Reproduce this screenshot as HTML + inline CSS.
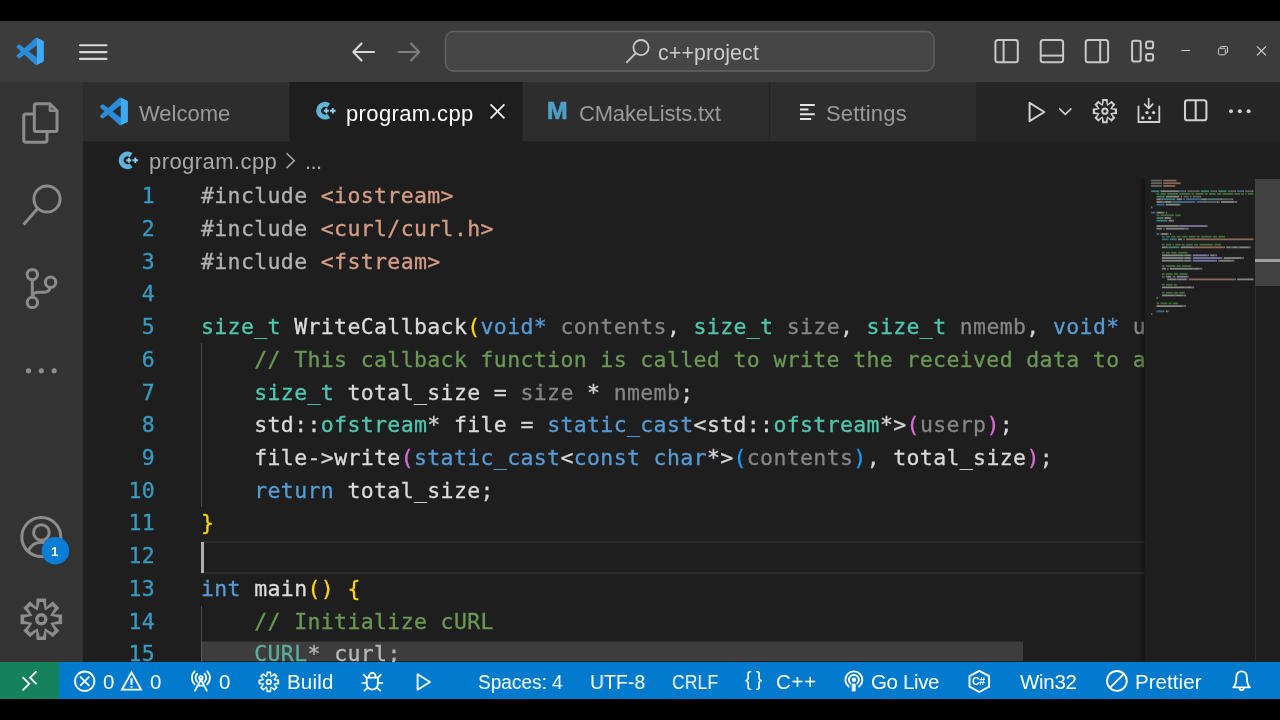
<!DOCTYPE html>
<html><head><meta charset="utf-8">
<style>
*{margin:0;padding:0;box-sizing:border-box}
html,body{width:1280px;height:720px;overflow:hidden;background:#000}
body{position:relative;font-family:"Liberation Sans",sans-serif;color:#ccc}
.abs{position:absolute}
#title{left:0;top:21px;width:1280px;height:61px;background:#3c3c3c}
#act{left:0;top:82px;width:83px;height:580px;background:#333}
#tabs{left:83px;top:82px;width:1197px;height:60px;background:#252526}
.tab{position:absolute;top:0;height:59px;background:#2d2d2d}
.tab.on{background:#1e1e1e;height:60px}
.t,.code,.ln{will-change:transform}
.t{position:absolute;white-space:pre;line-height:1}
#ed{left:83px;top:142px;width:1197px;height:520px;background:#1e1e1e;overflow:hidden}
#status{left:0;top:661.5px;width:1280px;height:37px;background:#007acc;color:#fff}
#remote{left:0;top:0;width:59px;height:37px;background:#16825d}
.ui{font-size:22px}
.st{font-size:20.5px;top:10.3px;color:#fff}
.code{-webkit-text-stroke:.3px;font-family:"DejaVu Sans Mono","Liberation Mono",monospace;font-size:21.5px;letter-spacing:.367px;white-space:pre;position:absolute;left:118px;line-height:1;color:#dadada}
.ln{-webkit-text-stroke:.3px;font-family:"DejaVu Sans Mono","Liberation Mono",monospace;font-size:21.5px;letter-spacing:.367px;white-space:pre;position:absolute;line-height:1;color:#379ac0;text-align:right;width:60px;left:12px}
.k{color:#569cd6}.ty{color:#4ec9b0}.s{color:#d69d85}.c{color:#6a9955}.p{color:#b2b2b2}.pa{color:#868686}.v{color:#dadada}
.b1{color:#ffd700}.b2{color:#da70d6}.b3{color:#179fff}.f{color:#dcdcdc}.o{color:#d4d4d4}
</style></head><body>
<div id="title" class="abs">
<svg class="abs" style="left:0;top:0" width="1280" height="61" viewBox="0 21 1280 61" fill="none">
  <!-- vscode logo -->
  <g transform="translate(16.5,37.8) scale(0.272)">
    <path fill-rule="evenodd" d="M70.9 99.3a6.2 6.2 0 0 0 4.96-.19l20.59-9.9A6.25 6.25 0 0 0 100 83.58V16.41a6.25 6.25 0 0 0-3.54-5.63L75.87.87a6.23 6.23 0 0 0-7.1 1.21L29.35 38.04 12.19 25.01a4.16 4.16 0 0 0-5.32.24l-5.5 5.01a4.17 4.17 0 0 0 0 6.16L16.25 50 1.37 63.58a4.17 4.17 0 0 0 0 6.17l5.5 5a4.16 4.16 0 0 0 5.32.24l17.17-13.03L68.77 97.9a6.2 6.2 0 0 0 2.14 1.4zM75.02 27.3L45.11 50l29.9 22.7V27.3z" fill="#2b8bd6"/>
    <path d="M75 0.6L96.46 10.78A6.25 6.25 0 0 1 100 16.41V83.58A6.25 6.25 0 0 1 96.45 89.2L75 99.4Z" fill="#3fa9f5"/>
  </g>
  <!-- hamburger -->
  <g stroke="#d6d6d6" stroke-width="2.1" stroke-linecap="round">
    <path d="M80 45.3H106.5M80 52.1H106.5M80 58.9H106.5"/>
  </g>
  <!-- arrows -->
  <g stroke="#d8d8d8" stroke-width="2.1" stroke-linecap="round" stroke-linejoin="round">
    <path d="M353.5 52H374M361.5 43.5L353.3 52L361.5 60.5"/>
  </g>
  <g stroke="#7e7e7e" stroke-width="2.1" stroke-linecap="round" stroke-linejoin="round">
    <path d="M398.5 52H419M411 43.5L419.2 52L411 60.5"/>
  </g>
  <!-- search box -->
  <rect x="445.5" y="31.5" width="488.5" height="39.5" rx="8" fill="#464646" stroke="#646464" stroke-width="1.3"/>
  <g stroke="#c8c8c8" stroke-width="1.8" stroke-linecap="round">
    <circle cx="641" cy="47.6" r="7.6"/>
    <path d="M635.5 53.3L626.8 62.3"/>
  </g>
  <!-- layout icons -->
  <g stroke="#c8c8c8" stroke-width="2" stroke-linejoin="round">
    <rect x="995.4" y="39.9" width="22.4" height="22.4" rx="2.6"/><path d="M1003.6 40V62"/>
    <rect x="1040.7" y="39.9" width="22.4" height="22.4" rx="2.6"/><path d="M1041 55.6H1063"/>
    <rect x="1085.7" y="39.9" width="22.4" height="22.4" rx="2.6"/><path d="M1100.2 40V62"/>
    <rect x="1132.1" y="40.8" width="8.6" height="20.6" rx="2"/>
    <rect x="1146.1" y="41.6" width="7" height="6.6" rx="1.8"/>
    <rect x="1146.1" y="54" width="7" height="6.6" rx="1.8"/>
  </g>
  <!-- window controls -->
  <g stroke="#d0d0d0" stroke-width="1">
    <path d="M1181.5 50.5H1190"/>
    <rect x="1218.4" y="48.3" width="7" height="6.5" rx="1.2"/>
    <path d="M1220.3 48V47.4Q1220.3 46.5 1221.4 46.5H1226.3Q1227.5 46.5 1227.5 47.7V52Q1227.5 53 1226.3 53H1225.6"/>
    <path d="M1257 46.3L1266 55.3M1266 46.3L1257 55.3" stroke-width="1.2"/>
  </g>
</svg>
<span class="t ui" id="proj" style="left:657.6px;top:22.3px;font-size:21.3px;letter-spacing:.15px;color:#ccc">c++project</span>

</div>
<div id="act" class="abs">
<svg class="abs" style="left:0;top:0" width="83" height="579" viewBox="0 82 83 579" fill="none">
  <g stroke="#8c8c8c" stroke-width="3" stroke-linejoin="round">
    <!-- files -->
    <path d="M50 103.8H36.5Q34.3 103.8 34.3 106V129.4Q34.3 131.6 36.5 131.6H54.8Q57 131.6 57 129.4V110.8Z"/>
    <path d="M50 103.8V110.8H57" stroke-width="2.6"/>
    <path d="M33 114H26Q23.8 114 23.8 116.2V140Q23.8 142.2 26 142.2H44.8Q47 142.2 47 140V133"/>
    <!-- search -->
    <circle cx="47" cy="199" r="13.1"/>
    <path d="M37.6 208.6L23.6 224.4" stroke-linecap="butt"/>
    <!-- scm -->
    <circle cx="32.3" cy="274.6" r="5.2"/><circle cx="50.6" cy="282.2" r="5.2"/><circle cx="32.4" cy="302.4" r="5.2"/>
    <path d="M32.3 280V297"/>
    <path d="M50 287.6Q49.5 292.2 44 292.2H38Q32.8 292.2 32.4 297"/>
    <!-- account -->
    <circle cx="41.3" cy="537.1" r="19.5"/>
    <circle cx="41.4" cy="532.5" r="7.8"/>
    <path d="M28.3 552Q31 542.2 41.3 542.2Q51.6 542.2 54.3 552"/>
    </g>
  <g id="gear2">
    <path d="M36.60 598.50L46.00 598.50L46.43 606.92L52.68 601.27L59.33 607.92L53.68 614.17L62.10 614.60L62.10 624.00L53.68 624.43L59.33 630.68L52.68 637.33L46.43 631.68L46.00 640.10L36.60 640.10L36.17 631.68L29.92 637.33L23.27 630.68L28.92 624.43L20.50 624.00L20.50 614.60L28.92 614.17L23.27 607.92L29.92 601.27L36.17 606.92ZM39.60 602.10L43.00 602.10L44.97 610.43L52.26 605.94L54.66 608.34L50.17 615.63L58.50 617.60L58.50 621.00L50.17 622.97L54.66 630.26L52.26 632.66L44.97 628.17L43.00 636.50L39.60 636.50L37.63 628.17L30.34 632.66L27.94 630.26L32.43 622.97L24.10 621.00L24.10 617.60L32.43 615.63L27.94 608.34L30.34 605.94L37.63 610.43Z" fill="#8c8c8c" fill-rule="evenodd"/>
    <circle cx="41.3" cy="619.3" r="4.50" stroke="#8c8c8c" stroke-width="3.40" fill="none"/>
  </g>
  <g fill="#8c8c8c"><circle cx="28.5" cy="370.8" r="2.6"/><circle cx="41.3" cy="370.8" r="2.6"/><circle cx="54.2" cy="370.8" r="2.6"/></g>
  <circle cx="55.4" cy="550.8" r="13.8" fill="#0a7dd4"/>
</svg>
<span class="t" style="left:51.2px;top:544.3px;font-size:13.4px;font-weight:bold;color:#fff;top:463.1px">1</span>

</div>
<div id="tabs" class="abs">
<div class="tab" style="left:0;width:206px"><span class="t ui" id="tw" style="left:56px;top:21.3px;color:#9a9a9a">Welcome</span></div>
<div class="tab on" style="left:207px;width:232px"><span class="t ui" id="tp" style="letter-spacing:.38px;left:263.5px;top:21.3px;color:#fff;left:55.6px">program.cpp</span></div>
<div class="tab" style="left:440px;width:246px"><span class="t" style="left:23.8px;top:16.6px;font-size:24.8px;font-weight:bold;color:#4fa0c8;-webkit-text-stroke:.7px #4fa0c8">M</span><span class="t ui" id="tc" style="letter-spacing:-.19px;left:56px;top:21.3px;color:#9a9a9a">CMakeLists.txt</span></div>
<div class="tab" style="left:687px;width:206px"><span class="t ui" id="ts" style="letter-spacing:.17px;left:56px;top:21.3px;color:#9a9a9a">Settings</span></div>
<svg class="abs" style="left:0;top:0" width="1197" height="60" viewBox="83 82 1197 60" fill="none">
  <!-- welcome logo -->
  <g transform="translate(100,97.5) scale(0.278)">
    <path fill-rule="evenodd" d="M70.9 99.3a6.2 6.2 0 0 0 4.96-.19l20.59-9.9A6.25 6.25 0 0 0 100 83.58V16.41a6.25 6.25 0 0 0-3.54-5.63L75.87.87a6.23 6.23 0 0 0-7.1 1.21L29.35 38.04 12.19 25.01a4.16 4.16 0 0 0-5.32.24l-5.5 5.01a4.17 4.17 0 0 0 0 6.16L16.25 50 1.37 63.58a4.17 4.17 0 0 0 0 6.17l5.5 5a4.16 4.16 0 0 0 5.32.24l17.17-13.03L68.77 97.9a6.2 6.2 0 0 0 2.14 1.4zM75.02 27.3L45.11 50l29.9 22.7V27.3z" fill="#2b8bd6"/>
    <path d="M75 0.6L96.46 10.78A6.25 6.25 0 0 1 100 16.41V83.58A6.25 6.25 0 0 1 96.45 89.2L75 99.4Z" fill="#3fa9f5"/>
  </g>
  <!-- cpp icon -->
  <g id="cppi">
    <path d="M328.64 105.5A6.35 6.35 0 1 0 328.64 115.9" stroke="#5fb3d9" stroke-width="5" fill="none"/>
    <path d="M323.8 110.7H328.8M326.3 108.2V113.2M330 110.7H335.6M332.8 107.9V113.5" stroke="#8ccfee" stroke-width="1.9"/>
  </g>
  <!-- close -->
  <path d="M490.6 104.4L504.4 118.3M504.4 104.4L490.6 118.3" stroke="#f0f0f0" stroke-width="1.8"/>
  <!-- settings icon -->
  <path d="M800 104.9H814.8M800 109.4H808.5M800 114.2H814.8M800 118.9H811.2" stroke="#e4e4e4" stroke-width="2"/>
  <!-- toolbar -->
  <g stroke="#d0d0d0" stroke-width="2.05" stroke-linejoin="round" stroke-linecap="round">
    <path d="M1029.6 102.8V121.2L1044.3 112Z"/>
    <path d="M1059.7 108.9L1065.3 114.4L1070.9 108.9" stroke-width="1.6"/>
    <rect x="1185" y="100.3" width="21.4" height="20" rx="2.4"/><path d="M1195.7 100.5V120" stroke-linecap="butt"/>
    <path d="M1148.7 98.5V108M1144.6 104.2L1148.7 108.3L1152.8 104.2" stroke-width="1.7"/>
    <path d="M1138.5 106.5V122H1159.3V106.5" stroke-width="1.8" stroke-linejoin="miter"/>
  </g>
  <g fill="#d0d0d0">
    <circle cx="1147" cy="112.6" r="1.7"/><circle cx="1153.6" cy="112.6" r="1.7"/>
    <circle cx="1142.8" cy="117.9" r="1.7"/><circle cx="1149.8" cy="117.9" r="1.7"/>
    <circle cx="1231" cy="111.3" r="2"/><circle cx="1239.8" cy="111.3" r="2"/><circle cx="1248.6" cy="111.3" r="2"/>
  </g>
  <!-- gear -->
  <g id="gear1">
    <path d="M1102.16 99.02L1107.64 99.02L1107.89 103.93L1111.54 100.64L1115.41 104.51L1112.12 108.16L1117.03 108.41L1117.03 113.89L1112.12 114.14L1115.41 117.79L1111.54 121.66L1107.89 118.37L1107.64 123.28L1102.16 123.28L1101.91 118.37L1098.26 121.66L1094.39 117.79L1097.68 114.14L1092.77 113.89L1092.77 108.41L1097.68 108.16L1094.39 104.51L1098.26 100.64L1101.91 103.93ZM1103.91 101.12L1105.89 101.12L1107.04 105.98L1111.29 103.36L1112.69 104.76L1110.07 109.01L1114.93 110.16L1114.93 112.14L1110.07 113.29L1112.69 117.54L1111.29 118.94L1107.04 116.32L1105.89 121.18L1103.91 121.18L1102.76 116.32L1098.51 118.94L1097.11 117.54L1099.73 113.29L1094.87 112.14L1094.87 110.16L1099.73 109.01L1097.11 104.76L1098.51 103.36L1102.76 105.98Z" fill="#d0d0d0" fill-rule="evenodd"/>
    <circle cx="1104.9" cy="111.15" r="2.62" stroke="#d0d0d0" stroke-width="1.98" fill="none"/>
  </g>
</svg>

</div>
<div id="ed" class="abs">
<div class="ln" style="top:43.36px">1</div>
<div class="code" style="top:43.36px"><span class="p">#include </span><span class="s">&lt;iostream&gt;</span></div>
<div class="ln" style="top:76.07px">2</div>
<div class="code" style="top:76.07px"><span class="p">#include </span><span class="s">&lt;curl/curl.h&gt;</span></div>
<div class="ln" style="top:108.78px">3</div>
<div class="code" style="top:108.78px"><span class="p">#include </span><span class="s">&lt;fstream&gt;</span></div>
<div class="ln" style="top:141.49px">4</div>
<div class="ln" style="top:174.20px">5</div>
<div class="code" style="top:174.20px"><span class="ty">size_t</span><span class="f"> WriteCallback</span><span class="b1">(</span><span class="k">void* </span><span class="pa">contents</span><span class="o">, </span><span class="ty">size_t</span><span class="pa"> size</span><span class="o">, </span><span class="ty">size_t</span><span class="pa"> nmemb</span><span class="o">, </span><span class="k">void* </span><span class="pa">userp</span><span class="b1">)</span><span class="o"> </span><span class="b1">{</span></div>
<div class="ln" style="top:206.91px">6</div>
<div class="code" style="top:206.91px"><span class="c">    // This callback function is called to write the received data to a file</span></div>
<div class="ln" style="top:239.62px">7</div>
<div class="code" style="top:239.62px"><span class="ty">    size_t</span><span class="v"> total_size </span><span class="o">= </span><span class="pa">size </span><span class="o">* </span><span class="pa">nmemb</span><span class="o">;</span></div>
<div class="ln" style="top:272.33px">8</div>
<div class="code" style="top:272.33px"><span class="v">    std</span><span class="o">::</span><span class="ty">ofstream</span><span class="o">* </span><span class="v">file </span><span class="o">= </span><span class="k">static_cast</span><span class="o">&lt;</span><span class="v">std</span><span class="o">::</span><span class="ty">ofstream</span><span class="o">*&gt;</span><span class="b2">(</span><span class="pa">userp</span><span class="b2">)</span><span class="o">;</span></div>
<div class="ln" style="top:305.04px">9</div>
<div class="code" style="top:305.04px"><span class="v">    file</span><span class="o">-&gt;</span><span class="f">write</span><span class="b2">(</span><span class="k">static_cast</span><span class="o">&lt;</span><span class="k">const char</span><span class="o">*&gt;</span><span class="b3">(</span><span class="pa">contents</span><span class="b3">)</span><span class="o">, </span><span class="v">total_size</span><span class="b2">)</span><span class="o">;</span></div>
<div class="ln" style="top:337.75px">10</div>
<div class="code" style="top:337.75px"><span class="k">    return</span><span class="v"> total_size</span><span class="o">;</span></div>
<div class="ln" style="top:370.46px">11</div>
<div class="code" style="top:370.46px"><span class="b1">}</span></div>
<div class="ln" style="top:403.17px">12</div>
<div class="ln" style="top:435.88px">13</div>
<div class="code" style="top:435.88px"><span class="k">int</span><span class="f"> main</span><span class="b1">()</span><span class="o"> </span><span class="b1">{</span></div>
<div class="ln" style="top:468.59px">14</div>
<div class="code" style="top:468.59px"><span class="c">    // Initialize cURL</span></div>
<div class="ln" style="top:501.30px">15</div>
<div class="code" style="top:501.30px"><span class="ty">    CURL</span><span class="o">* </span><span class="v">curl</span><span class="o">;</span></div>
<!-- current line highlight -->
<div class="abs" style="left:118px;top:399px;width:944px;height:2px;background:#2b2b2b"></div>
<div class="abs" style="left:118px;top:429.5px;width:944px;height:2px;background:#2b2b2b"></div>
<!-- indent guides -->
<div class="abs" style="left:118px;top:201px;width:1px;height:164px;background:#4a4a4a"></div>
<div class="abs" style="left:118px;top:464px;width:1px;height:60px;background:#4a4a4a"></div>
<!-- cursor -->
<div class="abs" style="left:118px;top:399.5px;width:3px;height:31.5px;background:#aeafad"></div>
<!-- breadcrumb -->
<span class="t ui" id="bc" style="left:65.6px;top:9.3px;color:#a9a9a9;letter-spacing:.43px">program.cpp</span>
<span class="t ui" id="bd" style="left:221.5px;top:9.3px;color:#a9a9a9;letter-spacing:-.6px">...</span>
<svg class="abs" style="left:0;top:0" width="1197" height="519" viewBox="83 142 1197 519" fill="none">
  <g transform="translate(-197.5,49.6)">
    <path d="M328.64 105.5A6.35 6.35 0 1 0 328.64 115.9" stroke="#5fb3d9" stroke-width="5" fill="none"/>
    <path d="M323.8 110.7H328.8M326.3 108.2V113.2M330 110.7H335.6M332.8 107.9V113.5" stroke="#8ccfee" stroke-width="1.9"/>
  </g>
  <path d="M286.5 153.2L294.3 160.7L286.5 168.2" stroke="#a0a0a0" stroke-width="1.6"/>
  <defs><linearGradient id="ms" x1="0" x2="1" y1="0" y2="0"><stop offset="0" stop-color="#000" stop-opacity="0"/><stop offset="1" stop-color="#000" stop-opacity="0.35"/></linearGradient></defs>
  <rect x="1145" y="179" width="110" height="482" fill="#1e1e1e"/>
  <rect x="1139" y="179" width="6" height="482" fill="url(#ms)"/>
  <!-- v scrollbar -->
  <rect x="1255" y="286" width="1" height="376" fill="#2e2e2e"/>
  <rect x="1255" y="179" width="25" height="107" fill="#424242"/>
  <rect x="1255" y="259" width="25" height="3" fill="#a0a0a0"/>
  <!-- h scrollbar -->
  <rect x="201" y="641.5" width="822" height="19.5" fill="#797979" fill-opacity="0.35"/>
<g opacity="0.58"><rect x="1151.1" y="179.70" width="10.8" height="1.8" fill="#9b9b9b"/><rect x="1163.2" y="179.70" width="13.4" height="1.8" fill="#d69d85"/><rect x="1151.1" y="182.37" width="10.8" height="1.8" fill="#9b9b9b"/><rect x="1163.2" y="182.37" width="17.5" height="1.8" fill="#d69d85"/><rect x="1151.1" y="185.04" width="10.8" height="1.8" fill="#9b9b9b"/><rect x="1163.2" y="185.04" width="12.1" height="1.8" fill="#d69d85"/><rect x="1151.1" y="190.38" width="8.1" height="1.8" fill="#4ec9b0"/><rect x="1160.5" y="190.38" width="17.5" height="1.8" fill="#d0d0d0"/><rect x="1178.0" y="190.38" width="1.3" height="1.8" fill="#b4b4b4"/><rect x="1179.3" y="190.38" width="5.4" height="1.8" fill="#569cd6"/><rect x="1184.7" y="190.38" width="1.3" height="1.8" fill="#b4b4b4"/><rect x="1187.4" y="190.38" width="10.8" height="1.8" fill="#8a8a8a"/><rect x="1198.2" y="190.38" width="1.3" height="1.8" fill="#b4b4b4"/><rect x="1200.9" y="190.38" width="8.1" height="1.8" fill="#4ec9b0"/><rect x="1210.3" y="190.38" width="5.4" height="1.8" fill="#8a8a8a"/><rect x="1215.7" y="190.38" width="1.3" height="1.8" fill="#b4b4b4"/><rect x="1218.3" y="190.38" width="8.1" height="1.8" fill="#4ec9b0"/><rect x="1227.8" y="190.38" width="6.7" height="1.8" fill="#8a8a8a"/><rect x="1234.5" y="190.38" width="1.3" height="1.8" fill="#b4b4b4"/><rect x="1237.2" y="190.38" width="5.4" height="1.8" fill="#569cd6"/><rect x="1242.6" y="190.38" width="1.3" height="1.8" fill="#b4b4b4"/><rect x="1245.2" y="190.38" width="6.7" height="1.8" fill="#8a8a8a"/><rect x="1252.0" y="190.38" width="1.3" height="1.8" fill="#b4b4b4"/><rect x="1156.5" y="193.05" width="2.7" height="1.8" fill="#57a64a"/><rect x="1160.5" y="193.05" width="5.4" height="1.8" fill="#57a64a"/><rect x="1167.2" y="193.05" width="10.8" height="1.8" fill="#57a64a"/><rect x="1179.3" y="193.05" width="10.8" height="1.8" fill="#57a64a"/><rect x="1191.4" y="193.05" width="2.7" height="1.8" fill="#57a64a"/><rect x="1195.5" y="193.05" width="8.1" height="1.8" fill="#57a64a"/><rect x="1204.9" y="193.05" width="2.7" height="1.8" fill="#57a64a"/><rect x="1208.9" y="193.05" width="6.7" height="1.8" fill="#57a64a"/><rect x="1217.0" y="193.05" width="4.0" height="1.8" fill="#57a64a"/><rect x="1222.4" y="193.05" width="10.8" height="1.8" fill="#57a64a"/><rect x="1234.5" y="193.05" width="5.4" height="1.8" fill="#57a64a"/><rect x="1241.2" y="193.05" width="2.7" height="1.8" fill="#57a64a"/><rect x="1245.2" y="193.05" width="1.3" height="1.8" fill="#57a64a"/><rect x="1247.9" y="193.05" width="5.4" height="1.8" fill="#57a64a"/><rect x="1156.5" y="195.72" width="8.1" height="1.8" fill="#4ec9b0"/><rect x="1165.9" y="195.72" width="13.4" height="1.8" fill="#d0d0d0"/><rect x="1180.7" y="195.72" width="1.3" height="1.8" fill="#b4b4b4"/><rect x="1183.4" y="195.72" width="5.4" height="1.8" fill="#8a8a8a"/><rect x="1190.1" y="195.72" width="1.3" height="1.8" fill="#b4b4b4"/><rect x="1192.8" y="195.72" width="6.7" height="1.8" fill="#8a8a8a"/><rect x="1199.5" y="195.72" width="1.3" height="1.8" fill="#b4b4b4"/><rect x="1156.5" y="198.39" width="4.0" height="1.8" fill="#d0d0d0"/><rect x="1160.5" y="198.39" width="1.3" height="1.8" fill="#b4b4b4"/><rect x="1161.9" y="198.39" width="1.3" height="1.8" fill="#b4b4b4"/><rect x="1163.2" y="198.39" width="10.8" height="1.8" fill="#4ec9b0"/><rect x="1174.0" y="198.39" width="1.3" height="1.8" fill="#b4b4b4"/><rect x="1176.7" y="198.39" width="5.4" height="1.8" fill="#d0d0d0"/><rect x="1183.4" y="198.39" width="1.3" height="1.8" fill="#b4b4b4"/><rect x="1186.1" y="198.39" width="14.8" height="1.8" fill="#569cd6"/><rect x="1200.9" y="198.39" width="1.3" height="1.8" fill="#b4b4b4"/><rect x="1202.2" y="198.39" width="4.0" height="1.8" fill="#d0d0d0"/><rect x="1206.2" y="198.39" width="1.3" height="1.8" fill="#b4b4b4"/><rect x="1207.6" y="198.39" width="1.3" height="1.8" fill="#b4b4b4"/><rect x="1208.9" y="198.39" width="10.8" height="1.8" fill="#4ec9b0"/><rect x="1219.7" y="198.39" width="1.3" height="1.8" fill="#b4b4b4"/><rect x="1221.0" y="198.39" width="1.3" height="1.8" fill="#b4b4b4"/><rect x="1222.4" y="198.39" width="1.3" height="1.8" fill="#b4b4b4"/><rect x="1223.7" y="198.39" width="6.7" height="1.8" fill="#8a8a8a"/><rect x="1230.5" y="198.39" width="1.3" height="1.8" fill="#b4b4b4"/><rect x="1231.8" y="198.39" width="1.3" height="1.8" fill="#b4b4b4"/><rect x="1156.5" y="201.06" width="5.4" height="1.8" fill="#d0d0d0"/><rect x="1161.9" y="201.06" width="1.3" height="1.8" fill="#b4b4b4"/><rect x="1163.2" y="201.06" width="1.3" height="1.8" fill="#b4b4b4"/><rect x="1164.5" y="201.06" width="6.7" height="1.8" fill="#d0d0d0"/><rect x="1171.3" y="201.06" width="1.3" height="1.8" fill="#b4b4b4"/><rect x="1172.6" y="201.06" width="14.8" height="1.8" fill="#569cd6"/><rect x="1187.4" y="201.06" width="1.3" height="1.8" fill="#b4b4b4"/><rect x="1188.8" y="201.06" width="6.7" height="1.8" fill="#569cd6"/><rect x="1196.8" y="201.06" width="5.4" height="1.8" fill="#569cd6"/><rect x="1202.2" y="201.06" width="1.3" height="1.8" fill="#b4b4b4"/><rect x="1203.6" y="201.06" width="1.3" height="1.8" fill="#b4b4b4"/><rect x="1204.9" y="201.06" width="1.3" height="1.8" fill="#b4b4b4"/><rect x="1206.2" y="201.06" width="10.8" height="1.8" fill="#8a8a8a"/><rect x="1217.0" y="201.06" width="1.3" height="1.8" fill="#b4b4b4"/><rect x="1218.3" y="201.06" width="1.3" height="1.8" fill="#b4b4b4"/><rect x="1221.0" y="201.06" width="13.4" height="1.8" fill="#d0d0d0"/><rect x="1234.5" y="201.06" width="1.3" height="1.8" fill="#b4b4b4"/><rect x="1235.8" y="201.06" width="1.3" height="1.8" fill="#b4b4b4"/><rect x="1156.5" y="203.73" width="8.1" height="1.8" fill="#569cd6"/><rect x="1165.9" y="203.73" width="13.4" height="1.8" fill="#d0d0d0"/><rect x="1179.3" y="203.73" width="1.3" height="1.8" fill="#b4b4b4"/><rect x="1151.1" y="206.40" width="1.3" height="1.8" fill="#b4b4b4"/><rect x="1151.1" y="211.74" width="4.0" height="1.8" fill="#569cd6"/><rect x="1156.5" y="211.74" width="5.4" height="1.8" fill="#d0d0d0"/><rect x="1161.9" y="211.74" width="1.3" height="1.8" fill="#b4b4b4"/><rect x="1163.2" y="211.74" width="1.3" height="1.8" fill="#b4b4b4"/><rect x="1165.9" y="211.74" width="1.3" height="1.8" fill="#b4b4b4"/><rect x="1156.5" y="214.41" width="2.7" height="1.8" fill="#57a64a"/><rect x="1160.5" y="214.41" width="13.4" height="1.8" fill="#57a64a"/><rect x="1175.3" y="214.41" width="5.4" height="1.8" fill="#57a64a"/><rect x="1156.5" y="217.08" width="5.4" height="1.8" fill="#4ec9b0"/><rect x="1161.9" y="217.08" width="1.3" height="1.8" fill="#b4b4b4"/><rect x="1164.5" y="217.08" width="5.4" height="1.8" fill="#d0d0d0"/><rect x="1169.9" y="217.08" width="1.3" height="1.8" fill="#b4b4b4"/><rect x="1156.5" y="219.75" width="10.8" height="1.8" fill="#4ec9b0"/><rect x="1168.6" y="219.75" width="4.0" height="1.8" fill="#d0d0d0"/><rect x="1172.6" y="219.75" width="1.3" height="1.8" fill="#b4b4b4"/><rect x="1156.5" y="225.09" width="21.5" height="1.8" fill="#d0d0d0"/><rect x="1178.0" y="225.09" width="1.3" height="1.8" fill="#b4b4b4"/><rect x="1179.3" y="225.09" width="25.6" height="1.8" fill="#beb7ff"/><rect x="1204.9" y="225.09" width="1.3" height="1.8" fill="#b4b4b4"/><rect x="1206.2" y="225.09" width="1.3" height="1.8" fill="#b4b4b4"/><rect x="1156.5" y="227.76" width="5.4" height="1.8" fill="#d0d0d0"/><rect x="1163.2" y="227.76" width="1.3" height="1.8" fill="#b4b4b4"/><rect x="1165.9" y="227.76" width="18.8" height="1.8" fill="#d0d0d0"/><rect x="1184.7" y="227.76" width="1.3" height="1.8" fill="#b4b4b4"/><rect x="1186.1" y="227.76" width="1.3" height="1.8" fill="#b4b4b4"/><rect x="1187.4" y="227.76" width="1.3" height="1.8" fill="#b4b4b4"/><rect x="1156.5" y="233.10" width="2.7" height="1.8" fill="#569cd6"/><rect x="1160.5" y="233.10" width="1.3" height="1.8" fill="#b4b4b4"/><rect x="1161.9" y="233.10" width="5.4" height="1.8" fill="#d0d0d0"/><rect x="1167.2" y="233.10" width="1.3" height="1.8" fill="#b4b4b4"/><rect x="1169.9" y="233.10" width="1.3" height="1.8" fill="#b4b4b4"/><rect x="1161.9" y="235.77" width="2.7" height="1.8" fill="#57a64a"/><rect x="1165.9" y="235.77" width="4.0" height="1.8" fill="#57a64a"/><rect x="1171.3" y="235.77" width="4.0" height="1.8" fill="#57a64a"/><rect x="1176.7" y="235.77" width="4.0" height="1.8" fill="#57a64a"/><rect x="1182.0" y="235.77" width="5.4" height="1.8" fill="#57a64a"/><rect x="1188.8" y="235.77" width="6.7" height="1.8" fill="#57a64a"/><rect x="1196.8" y="235.77" width="2.7" height="1.8" fill="#57a64a"/><rect x="1200.9" y="235.77" width="10.8" height="1.8" fill="#57a64a"/><rect x="1213.0" y="235.77" width="4.0" height="1.8" fill="#57a64a"/><rect x="1218.3" y="235.77" width="6.7" height="1.8" fill="#57a64a"/><rect x="1161.9" y="238.44" width="6.7" height="1.8" fill="#569cd6"/><rect x="1169.9" y="238.44" width="5.4" height="1.8" fill="#569cd6"/><rect x="1175.3" y="238.44" width="1.3" height="1.8" fill="#b4b4b4"/><rect x="1178.0" y="238.44" width="4.0" height="1.8" fill="#d0d0d0"/><rect x="1183.4" y="238.44" width="1.3" height="1.8" fill="#b4b4b4"/><rect x="1186.1" y="238.44" width="67.4" height="1.8" fill="#d69d85"/><rect x="1161.9" y="243.78" width="2.7" height="1.8" fill="#57a64a"/><rect x="1165.9" y="243.78" width="5.4" height="1.8" fill="#57a64a"/><rect x="1172.6" y="243.78" width="1.3" height="1.8" fill="#57a64a"/><rect x="1175.3" y="243.78" width="5.4" height="1.8" fill="#57a64a"/><rect x="1182.0" y="243.78" width="2.7" height="1.8" fill="#57a64a"/><rect x="1186.1" y="243.78" width="6.7" height="1.8" fill="#57a64a"/><rect x="1194.1" y="243.78" width="4.0" height="1.8" fill="#57a64a"/><rect x="1199.5" y="243.78" width="13.4" height="1.8" fill="#57a64a"/><rect x="1214.3" y="243.78" width="6.7" height="1.8" fill="#57a64a"/><rect x="1161.9" y="246.45" width="4.0" height="1.8" fill="#d0d0d0"/><rect x="1165.9" y="246.45" width="1.3" height="1.8" fill="#b4b4b4"/><rect x="1167.2" y="246.45" width="1.3" height="1.8" fill="#b4b4b4"/><rect x="1168.6" y="246.45" width="10.8" height="1.8" fill="#4ec9b0"/><rect x="1180.7" y="246.45" width="12.1" height="1.8" fill="#d0d0d0"/><rect x="1192.8" y="246.45" width="1.3" height="1.8" fill="#b4b4b4"/><rect x="1194.1" y="246.45" width="29.6" height="1.8" fill="#d69d85"/><rect x="1223.7" y="246.45" width="1.3" height="1.8" fill="#b4b4b4"/><rect x="1226.4" y="246.45" width="4.0" height="1.8" fill="#d0d0d0"/><rect x="1230.5" y="246.45" width="1.3" height="1.8" fill="#b4b4b4"/><rect x="1231.8" y="246.45" width="1.3" height="1.8" fill="#b4b4b4"/><rect x="1233.1" y="246.45" width="4.0" height="1.8" fill="#d0d0d0"/><rect x="1237.2" y="246.45" width="1.3" height="1.8" fill="#b4b4b4"/><rect x="1238.5" y="246.45" width="1.3" height="1.8" fill="#b4b4b4"/><rect x="1239.9" y="246.45" width="8.1" height="1.8" fill="#d0d0d0"/><rect x="1247.9" y="246.45" width="1.3" height="1.8" fill="#b4b4b4"/><rect x="1249.3" y="246.45" width="1.3" height="1.8" fill="#b4b4b4"/><rect x="1161.9" y="251.79" width="2.7" height="1.8" fill="#57a64a"/><rect x="1165.9" y="251.79" width="4.0" height="1.8" fill="#57a64a"/><rect x="1171.3" y="251.79" width="5.4" height="1.8" fill="#57a64a"/><rect x="1178.0" y="251.79" width="9.4" height="1.8" fill="#57a64a"/><rect x="1161.9" y="254.46" width="21.5" height="1.8" fill="#d0d0d0"/><rect x="1183.4" y="254.46" width="1.3" height="1.8" fill="#b4b4b4"/><rect x="1184.7" y="254.46" width="5.4" height="1.8" fill="#d0d0d0"/><rect x="1190.1" y="254.46" width="1.3" height="1.8" fill="#b4b4b4"/><rect x="1192.8" y="254.46" width="14.8" height="1.8" fill="#beb7ff"/><rect x="1207.6" y="254.46" width="1.3" height="1.8" fill="#b4b4b4"/><rect x="1210.3" y="254.46" width="4.0" height="1.8" fill="#d0d0d0"/><rect x="1214.3" y="254.46" width="1.3" height="1.8" fill="#b4b4b4"/><rect x="1215.7" y="254.46" width="1.3" height="1.8" fill="#b4b4b4"/><rect x="1161.9" y="257.13" width="21.5" height="1.8" fill="#d0d0d0"/><rect x="1183.4" y="257.13" width="1.3" height="1.8" fill="#b4b4b4"/><rect x="1184.7" y="257.13" width="5.4" height="1.8" fill="#d0d0d0"/><rect x="1190.1" y="257.13" width="1.3" height="1.8" fill="#b4b4b4"/><rect x="1192.8" y="257.13" width="28.2" height="1.8" fill="#beb7ff"/><rect x="1221.0" y="257.13" width="1.3" height="1.8" fill="#b4b4b4"/><rect x="1223.7" y="257.13" width="17.5" height="1.8" fill="#d0d0d0"/><rect x="1241.2" y="257.13" width="1.3" height="1.8" fill="#b4b4b4"/><rect x="1242.6" y="257.13" width="1.3" height="1.8" fill="#b4b4b4"/><rect x="1161.9" y="259.80" width="21.5" height="1.8" fill="#d0d0d0"/><rect x="1183.4" y="259.80" width="1.3" height="1.8" fill="#b4b4b4"/><rect x="1184.7" y="259.80" width="5.4" height="1.8" fill="#d0d0d0"/><rect x="1190.1" y="259.80" width="1.3" height="1.8" fill="#b4b4b4"/><rect x="1192.8" y="259.80" width="22.9" height="1.8" fill="#beb7ff"/><rect x="1215.7" y="259.80" width="1.3" height="1.8" fill="#b4b4b4"/><rect x="1218.3" y="259.80" width="1.3" height="1.8" fill="#b4b4b4"/><rect x="1219.7" y="259.80" width="12.1" height="1.8" fill="#d0d0d0"/><rect x="1231.8" y="259.80" width="1.3" height="1.8" fill="#b4b4b4"/><rect x="1233.1" y="259.80" width="1.3" height="1.8" fill="#b4b4b4"/><rect x="1161.9" y="265.14" width="2.7" height="1.8" fill="#57a64a"/><rect x="1165.9" y="265.14" width="9.4" height="1.8" fill="#57a64a"/><rect x="1176.7" y="265.14" width="4.0" height="1.8" fill="#57a64a"/><rect x="1182.0" y="265.14" width="9.4" height="1.8" fill="#57a64a"/><rect x="1161.9" y="267.81" width="4.0" height="1.8" fill="#d0d0d0"/><rect x="1167.2" y="267.81" width="1.3" height="1.8" fill="#b4b4b4"/><rect x="1169.9" y="267.81" width="22.9" height="1.8" fill="#d0d0d0"/><rect x="1192.8" y="267.81" width="1.3" height="1.8" fill="#b4b4b4"/><rect x="1194.1" y="267.81" width="5.4" height="1.8" fill="#d0d0d0"/><rect x="1199.5" y="267.81" width="1.3" height="1.8" fill="#b4b4b4"/><rect x="1200.9" y="267.81" width="1.3" height="1.8" fill="#b4b4b4"/><rect x="1161.9" y="273.15" width="2.7" height="1.8" fill="#57a64a"/><rect x="1165.9" y="273.15" width="6.7" height="1.8" fill="#57a64a"/><rect x="1174.0" y="273.15" width="4.0" height="1.8" fill="#57a64a"/><rect x="1179.3" y="273.15" width="8.1" height="1.8" fill="#57a64a"/><rect x="1161.9" y="275.82" width="2.7" height="1.8" fill="#569cd6"/><rect x="1165.9" y="275.82" width="1.3" height="1.8" fill="#b4b4b4"/><rect x="1167.2" y="275.82" width="4.0" height="1.8" fill="#d0d0d0"/><rect x="1172.6" y="275.82" width="1.3" height="1.8" fill="#b4b4b4"/><rect x="1174.0" y="275.82" width="1.3" height="1.8" fill="#b4b4b4"/><rect x="1176.7" y="275.82" width="10.8" height="1.8" fill="#beb7ff"/><rect x="1187.4" y="275.82" width="1.3" height="1.8" fill="#b4b4b4"/><rect x="1167.2" y="278.49" width="9.4" height="1.8" fill="#d0d0d0"/><rect x="1176.7" y="278.49" width="1.3" height="1.8" fill="#b4b4b4"/><rect x="1178.0" y="278.49" width="8.1" height="1.8" fill="#d0d0d0"/><rect x="1186.1" y="278.49" width="1.3" height="1.8" fill="#b4b4b4"/><rect x="1188.8" y="278.49" width="45.7" height="1.8" fill="#d69d85"/><rect x="1234.5" y="278.49" width="1.3" height="1.8" fill="#b4b4b4"/><rect x="1237.2" y="278.49" width="16.3" height="1.8" fill="#d0d0d0"/><rect x="1161.9" y="283.83" width="2.7" height="1.8" fill="#57a64a"/><rect x="1165.9" y="283.83" width="6.7" height="1.8" fill="#57a64a"/><rect x="1174.0" y="283.83" width="2.7" height="1.8" fill="#57a64a"/><rect x="1161.9" y="286.50" width="22.9" height="1.8" fill="#d0d0d0"/><rect x="1184.7" y="286.50" width="1.3" height="1.8" fill="#b4b4b4"/><rect x="1186.1" y="286.50" width="5.4" height="1.8" fill="#d0d0d0"/><rect x="1191.4" y="286.50" width="1.3" height="1.8" fill="#b4b4b4"/><rect x="1192.8" y="286.50" width="1.3" height="1.8" fill="#b4b4b4"/><rect x="1161.9" y="291.84" width="2.7" height="1.8" fill="#57a64a"/><rect x="1165.9" y="291.84" width="6.7" height="1.8" fill="#57a64a"/><rect x="1174.0" y="291.84" width="4.0" height="1.8" fill="#57a64a"/><rect x="1179.3" y="291.84" width="5.4" height="1.8" fill="#57a64a"/><rect x="1161.9" y="294.51" width="12.1" height="1.8" fill="#d0d0d0"/><rect x="1174.0" y="294.51" width="1.3" height="1.8" fill="#b4b4b4"/><rect x="1175.3" y="294.51" width="6.7" height="1.8" fill="#d0d0d0"/><rect x="1182.0" y="294.51" width="1.3" height="1.8" fill="#b4b4b4"/><rect x="1183.4" y="294.51" width="1.3" height="1.8" fill="#b4b4b4"/><rect x="1184.7" y="294.51" width="1.3" height="1.8" fill="#b4b4b4"/><rect x="1156.5" y="297.18" width="1.3" height="1.8" fill="#b4b4b4"/><rect x="1156.5" y="302.52" width="2.7" height="1.8" fill="#57a64a"/><rect x="1160.5" y="302.52" width="6.7" height="1.8" fill="#57a64a"/><rect x="1168.6" y="302.52" width="2.7" height="1.8" fill="#57a64a"/><rect x="1172.6" y="302.52" width="5.4" height="1.8" fill="#57a64a"/><rect x="1156.5" y="305.19" width="25.6" height="1.8" fill="#d0d0d0"/><rect x="1182.0" y="305.19" width="1.3" height="1.8" fill="#b4b4b4"/><rect x="1183.4" y="305.19" width="1.3" height="1.8" fill="#b4b4b4"/><rect x="1184.7" y="305.19" width="1.3" height="1.8" fill="#b4b4b4"/><rect x="1156.5" y="310.53" width="8.1" height="1.8" fill="#569cd6"/><rect x="1165.9" y="310.53" width="1.3" height="1.8" fill="#b5cea8"/><rect x="1167.2" y="310.53" width="1.3" height="1.8" fill="#b4b4b4"/><rect x="1151.1" y="313.20" width="1.3" height="1.8" fill="#b4b4b4"/></g>
</svg>

</div>
<div id="status" class="abs">
<div id="remote" class="abs"></div>
<span class="t st" id="s0a" style="left:103px">0</span>
<span class="t st" id="s0b" style="left:150px">0</span>
<span class="t st" id="s0c" style="left:218.8px">0</span>
<span class="t st" id="sbuild" style="letter-spacing:.2px;left:286.8px">Build</span>
<span class="t st" id="sspaces" style="transform:scaleX(.928);transform-origin:0 0;left:477.6px">Spaces: 4</span>
<span class="t st" id="sutf" style="transform:scaleX(.95);transform-origin:0 0;left:590.3px">UTF-8</span>
<span class="t st" id="scrlf" style="transform:scaleX(.863);transform-origin:0 0;left:671.8px">CRLF</span>
<span class="t st" id="scpp" style="letter-spacing:.7px;left:776px">C++</span>
<span class="t st" id="sgolive" style="letter-spacing:-.36px;left:871.2px">Go Live</span>
<span class="t st" id="swin" style="letter-spacing:-.3px;left:1020px">Win32</span>
<span class="t st" id="spret" style="letter-spacing:.06px;left:1135px">Prettier</span>
<svg class="abs" style="left:0;top:0" width="1280" height="37" viewBox="0 661 1280 37" fill="none">
  <g stroke="#fff" stroke-width="1.85" stroke-linejoin="round" stroke-linecap="round">
    <!-- remote -->
    <path d="M22.6 676.2L29.2 682.8L22.6 689.4M36.5 670.3L30.1 676.7L36.5 683.1" stroke-linecap="butt" stroke-linejoin="miter"/>
    <!-- error -->
    <circle cx="84.7" cy="680.2" r="9.7"/><path d="M80.6 676.1L88.8 684.3M88.8 676.1L80.6 684.3"/>
    <!-- warning -->
    <path d="M131.5 671.3L141 688.6H122Z" stroke-linejoin="miter"/><path d="M131.5 677.3V683.8" stroke-linecap="butt" stroke-width="2.2"/><path d="M131.5 685.2V686.6" stroke-linecap="butt" stroke-width="2.2"/>
    <!-- antenna -->
    <path d="M200.9 678.6L195 689.6M200.9 678.6L206.8 689.6M197.6 684.6H204.2"/>
    <circle cx="200.9" cy="676.8" r="1.7"/>
    <path d="M197.3 672.8A5.4 5.4 0 0 0 197.3 680.8M204.5 672.8A5.4 5.4 0 0 1 204.5 680.8"/>
    <path d="M194.6 670.3A9.0 9.0 0 0 0 194.6 683.3M207.2 670.3A9.0 9.0 0 0 1 207.2 683.3"/>
    <!-- bug -->
    <path d="M366.7 676.6H377.9V683A5.6 5.6 0 0 1 366.7 683Z"/>
    <path d="M368.9 676.4A3.4 4.7 0 0 1 375.7 676.4"/>
    <path d="M366.6 676.6L363.7 673.6M378 676.6L380.9 673.6M366.4 682H362M378.2 682H382.6M367.6 686.8L364.3 689.7M377 686.8L380.3 689.7" stroke-width="1.6"/>
    <!-- play -->
    <path d="M417.6 673.2V688.8L430 681Z"/>
    <!-- braces -->
    <!-- go live -->
    <circle cx="853.9" cy="678.7" r="2.2" fill="#fff" stroke="none"/>
    <path d="M852.6 683H855.2V690H852.6Z" fill="#fff" stroke-width="0.9"/>
    <path d="M850.6 682.6A5.0 5.0 0 1 1 857.2 682.6"/>
    <path d="M848.7 685.6A8.5 8.5 0 1 1 859.1 685.6"/>
    <!-- c# hexagon -->
    <path d="M979.3 669.8L989.1 675.1V685.7L979.3 691L969.5 685.7V675.1Z" stroke-width="1.9"/>
    <!-- prettier -->
    <circle cx="1116.9" cy="679.9" r="9.9"/><path d="M1123.9 672.9L1109.9 686.9"/>
    <!-- bell -->
    <path d="M1233.3 686.4C1235.9 684 1236.3 682 1236.3 677.2C1236.3 672.8 1238.4 670.4 1241.6 670.4C1244.8 670.4 1246.9 672.8 1246.9 677.2C1246.9 682 1247.3 684 1249.9 686.4Z"/>
    <path d="M1239.4 687.6A2.3 2.3 0 0 0 1243.8 687.6"/>
  </g>
  <g id="gear3">
    <path d="M266.46 670.55L271.14 670.55L271.35 674.74L274.47 671.93L277.77 675.23L274.96 678.35L279.15 678.56L279.15 683.24L274.96 683.45L277.77 686.57L274.47 689.87L271.35 687.06L271.14 691.25L266.46 691.25L266.25 687.06L263.13 689.87L259.83 686.57L262.64 683.45L258.45 683.24L258.45 678.56L262.64 678.35L259.83 675.23L263.13 671.93L266.25 674.74ZM267.95 672.34L269.65 672.34L270.63 676.49L274.25 674.25L275.45 675.45L273.21 679.07L277.36 680.05L277.36 681.75L273.21 682.73L275.45 686.35L274.25 687.55L270.63 685.31L269.65 689.46L267.95 689.46L266.97 685.31L263.35 687.55L262.15 686.35L264.39 682.73L260.24 681.75L260.24 680.05L264.39 679.07L262.15 675.45L263.35 674.25L266.97 676.49Z" fill="#ffffff" fill-rule="evenodd"/>
    <circle cx="268.8" cy="680.9" r="2.24" stroke="#ffffff" stroke-width="1.69" fill="none"/>
  </g>
</svg>
<span class="t" style="left:744.5px;top:8.6px;font-size:19.5px;color:#fff;letter-spacing:4.3px">{}</span>
<span class="t" style="left:972.3px;top:14px;font-size:10.6px;font-weight:bold;color:#fff;letter-spacing:-.4px">C#</span>

</div>
</body></html>
